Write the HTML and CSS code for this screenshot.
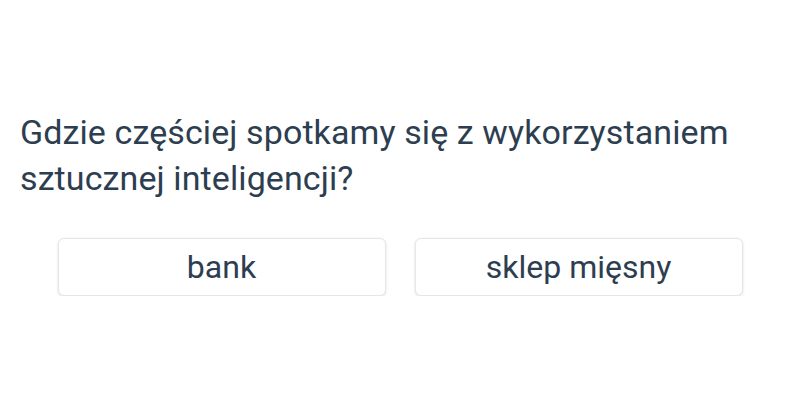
FILE: index.html
```html
<!DOCTYPE html>
<html lang="pl">
<head>
<meta charset="utf-8">
<link rel="stylesheet" href="styles.css">
</head>
<body>
<div class="quiz">
  <p class="question">Gdzie częściej spotkamy się z wykorzystaniem sztucznej inteligencji?</p>
  <div class="answers">
    <button class="answer">bank</button>
    <button class="answer">sklep mięsny</button>
  </div>
</div>
</body>
</html>
```

FILE: styles.css
```css
html, body {
  margin: 0;
  padding: 0;
  background: #ffffff;
}
body {
  font-family: Roboto, "Noto Sans", sans-serif;
  color: #2c3e50;
}
.quiz {
  padding: 109px 20px 0 20px;
}
.question {
  margin: 0;
  font-size: 34px;
  line-height: 46px;
  letter-spacing: 0.1px;
  max-width: 745px;
}
.answers {
  display: flex;
  justify-content: center;
  gap: 29px;
  margin-top: 37px;
}
.answer {
  width: 328px;
  height: 58px;
  background: #ffffff;
  border: 1px solid #e6e6e6;
  border-radius: 6px;
  box-shadow: 0 1px 3px rgba(0, 0, 0, 0.12);
  font-family: Roboto, "Noto Sans", sans-serif;
  font-size: 32px;
  color: #2c3e50;
  padding: 0;
}
```
